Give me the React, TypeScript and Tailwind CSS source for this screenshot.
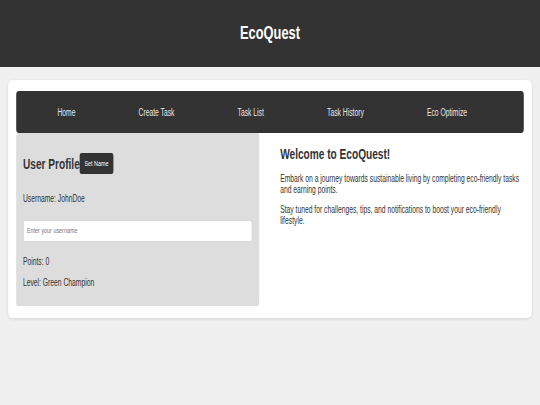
import React from "react";

const navItems = ["Home", "Create Task", "Task List", "Task History", "Eco Optimize"];

export default function App() {
  return (
    <div className="w-[540px] h-[405px] overflow-hidden bg-[#f0f0f0]">
      <div className="w-[800px] origin-top-left scale-x-[0.675] font-['Liberation_Sans',Arial,sans-serif] text-[#333]">
        <header className="h-[67px] bg-[#333] flex items-center justify-center">
          <h1 className="text-white font-bold text-[19px]">EcoQuest</h1>
        </header>

        <main className="mt-[13px] mx-[12px] bg-white rounded-[6px] px-[12px] pt-[11px] pb-[12px] shadow-[0_1px_4px_rgba(0,0,0,0.12)]">
          <nav className="h-[42px] bg-[#333] rounded-[4px] flex items-center justify-between pl-[61px] pr-[84px] text-[10px] text-[#e8e8e8]">
            {navItems.map((item) => (
              <a key={item} className="cursor-pointer">
                {item}
              </a>
            ))}
          </nav>

          <div className="flex">
            <section className="w-[360px] bg-[#ddd] rounded-[3px] pt-[20px] px-[10px] pb-[18px]">
              <div className="flex items-center h-[21px]">
                <h2 className="text-[15px] font-bold leading-[21px]">User Profile</h2>
                <button className="h-[21px] px-[7px] bg-[#333] text-white text-[8px] rounded-[3px]">
                  Set Name
                </button>
              </div>
              <p className="mt-[19px] text-[10px] leading-[11.5px]">Username: JohnDoe</p>
              <input
                className="mt-[15px] block w-full h-[22px] px-[5px] bg-white border border-[#d4d4d4] rounded-[3px] text-[8px] placeholder:text-[#777] font-['Liberation_Sans',Arial,sans-serif] outline-none"
                placeholder="Enter your username"
              />
              <p className="mt-[14px] text-[10px] leading-[11.5px]">Points: 0</p>
              <p className="mt-[9.5px] text-[10px] leading-[11.5px]">Level: Green Champion</p>
            </section>

            <section className="flex-1 pl-[31px] pt-[12px]">
              <h2 className="text-[15px] font-bold leading-[17px]">Welcome to EcoQuest!</h2>
              <p className="mt-[12px] text-[10px] leading-[10.7px]">
                Embark on a journey towards sustainable living by completing eco-friendly tasks and earning points.
              </p>
              <p className="mt-[9.6px] text-[10px] leading-[10.7px]">
                Stay tuned for challenges, tips, and notifications to boost your eco-friendly lifestyle.
              </p>
            </section>
          </div>
        </main>
      </div>
    </div>
  );
}
